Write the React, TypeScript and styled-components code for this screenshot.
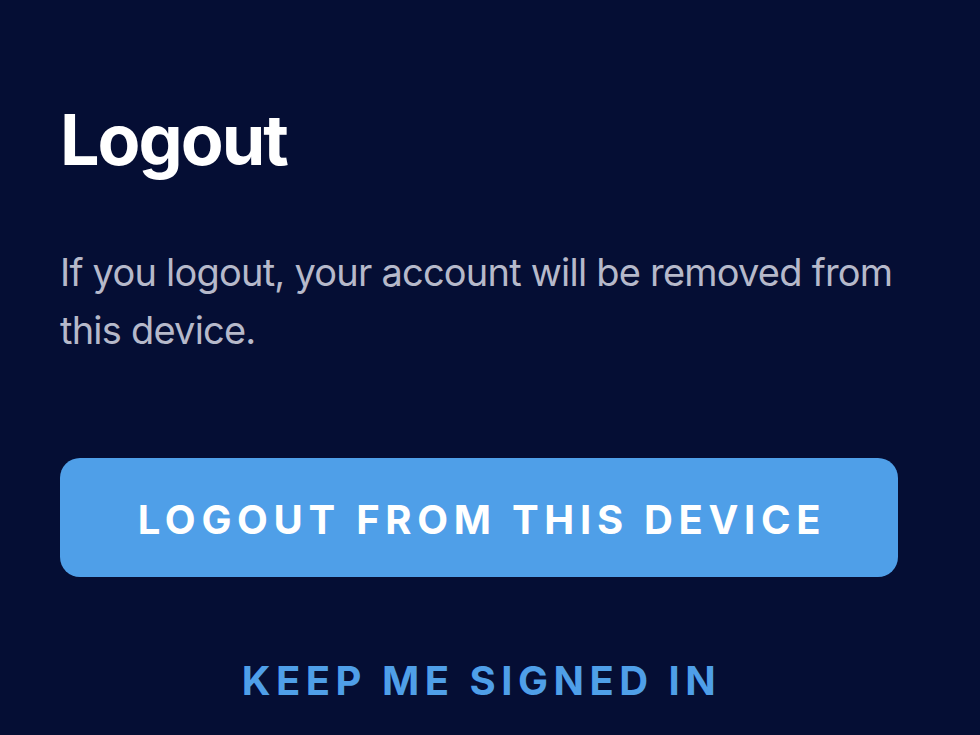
import React from "react";
import styled, { createGlobalStyle } from "styled-components";

const GlobalStyle = createGlobalStyle`
  html, body {
    margin: 0;
    padding: 0;
    background: #050e34;
  }
  body {
    font-family: Inter, "Noto Sans", "Liberation Sans", sans-serif;
    -webkit-font-smoothing: antialiased;
  }
`;

const Screen = styled.main`
  box-sizing: border-box;
  width: 980px;
  height: 735px;
  overflow: hidden;
  background: #050e34;
  padding: 105px 82px 0 60px;
  display: flex;
  flex-direction: column;
`;

const Title = styled.h1`
  margin: 0;
  font-size: 70px;
  line-height: 70px;
  font-weight: 700;
  letter-spacing: -2px;
  color: #ffffff;
`;

const Message = styled.p`
  margin: 68px -20px 0 0;
  font-size: 38px;
  line-height: 58px;
  font-weight: 400;
  letter-spacing: -0.78px;
  color: #b6b9ca;
`;

const PrimaryButton = styled.button`
  margin-top: 99px;
  height: 119px;
  width: 100%;
  border: none;
  border-radius: 20px;
  background: #4f9fe8;
  color: #ffffff;
  font-family: inherit;
  font-size: 40px;
  font-weight: 700;
  letter-spacing: 5.7px;
  text-transform: uppercase;
  cursor: pointer;
  display: flex;
  align-items: center;
  justify-content: center;
  padding: 4px 0 0 6px;
`;

const TextButton = styled.button`
  margin-top: 84px;
  align-self: center;
  border: none;
  background: transparent;
  padding: 0 0 0 5px;
  color: #4f9fe8;
  font-family: inherit;
  font-size: 40px;
  line-height: 40px;
  font-weight: 700;
  letter-spacing: 5.5px;
  text-transform: uppercase;
  cursor: pointer;
`;

export default function App() {
  return (
    <>
      <GlobalStyle />
      <Screen>
        <Title>Logout</Title>
        <Message>
          If you logout, your account will be removed from this device.
        </Message>
        <PrimaryButton>Logout from this device</PrimaryButton>
        <TextButton>Keep me signed in</TextButton>
      </Screen>
    </>
  );
}
